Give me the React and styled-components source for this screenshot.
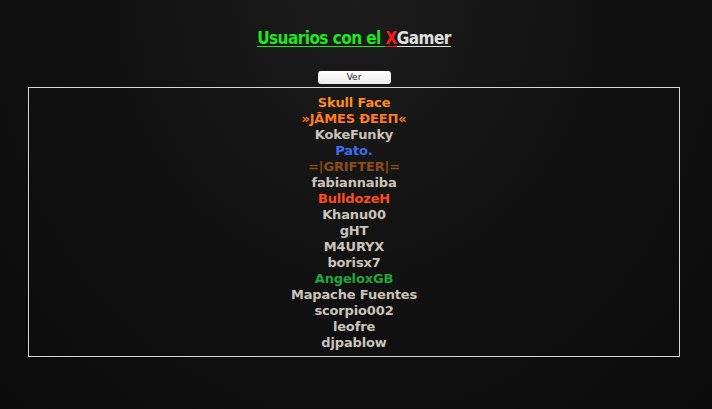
import styled, { createGlobalStyle } from "styled-components";

const Global = createGlobalStyle`
  html, body {
    margin: 0;
    padding: 0;
    height: 100%;
  }
  body {
    background: radial-gradient(ellipse at 50% 0%, #1c1c1c 0%, #121212 45%, #0b0b0b 100%);
    font-family: "DejaVu Sans", Verdana, sans-serif;
  }
`;

const Page = styled.div`
  width: 712px;
  height: 409px;
  padding: 27px 4px 0 0;
  box-sizing: border-box;
  display: flex;
  flex-direction: column;
  align-items: center;
`;

const Title = styled.h1`
  margin: 0;
  font-family: "DejaVu Sans Condensed", "DejaVu Sans", sans-serif;
  font-stretch: condensed;
  font-size: 17px;
  font-weight: bold;
  letter-spacing: -0.55px;
  line-height: 22px;
  text-underline-offset: 2px;
`;

const Part = styled.span`
  color: ${(p) => p.$color};
  text-decoration: underline;
  text-decoration-thickness: 1px;
  text-decoration-color: ${(p) => p.$color};
`;

const Button = styled.button`
  margin-top: 22px;
  width: 73px;
  height: 13px;
  padding: 0;
  border: none;
  border-radius: 3px;
  background: linear-gradient(#ffffff, #ececec);
  font-family: "DejaVu Sans", Verdana, sans-serif;
  font-size: 9px;
  line-height: 13px;
  color: #222;
`;

const Box = styled.div`
  margin-top: 3px;
  width: 652px;
  height: 270px;
  box-sizing: border-box;
  border: 1px solid #d6d6d6;
  padding-top: 7px;
  display: flex;
  flex-direction: column;
  align-items: center;
`;

const Name = styled.div`
  font-size: 13px;
  font-weight: bold;
  letter-spacing: -0.15px;
  line-height: 16px;
  color: ${(p) => p.$color || "#cbc4bc"};
`;

const users = [
  ["Skull Face", "#ff8c1f"],
  ["»JĀMES ĐEEП«", "#ff7a22"],
  ["KokeFunky"],
  ["Pato.", "#3d6ef0"],
  ["=|GRIFTER|=", "#8e4c1c"],
  ["fabiannaiba"],
  ["BulldozeH", "#ff4d1c"],
  ["Khanu00"],
  ["gHT"],
  ["M4URYX"],
  ["borisx7"],
  ["AngeloxGB", "#1fa83a"],
  ["Mapache Fuentes"],
  ["scorpio002"],
  ["leofre"],
  ["djpablow"],
];

export default function App() {
  return (
    <>
      <Global />
      <Page>
        <Title>
          <Part $color="#1ee81e">Usuarios con el </Part>
          <Part $color="#ff1a1a">X</Part>
          <Part $color="#e0e0e0">Gamer</Part>
        </Title>
        <Button>Ver</Button>
        <Box>
          {users.map(([n, c]) => (
            <Name key={n} $color={c}>
              {n}
            </Name>
          ))}
        </Box>
      </Page>
    </>
  );
}
